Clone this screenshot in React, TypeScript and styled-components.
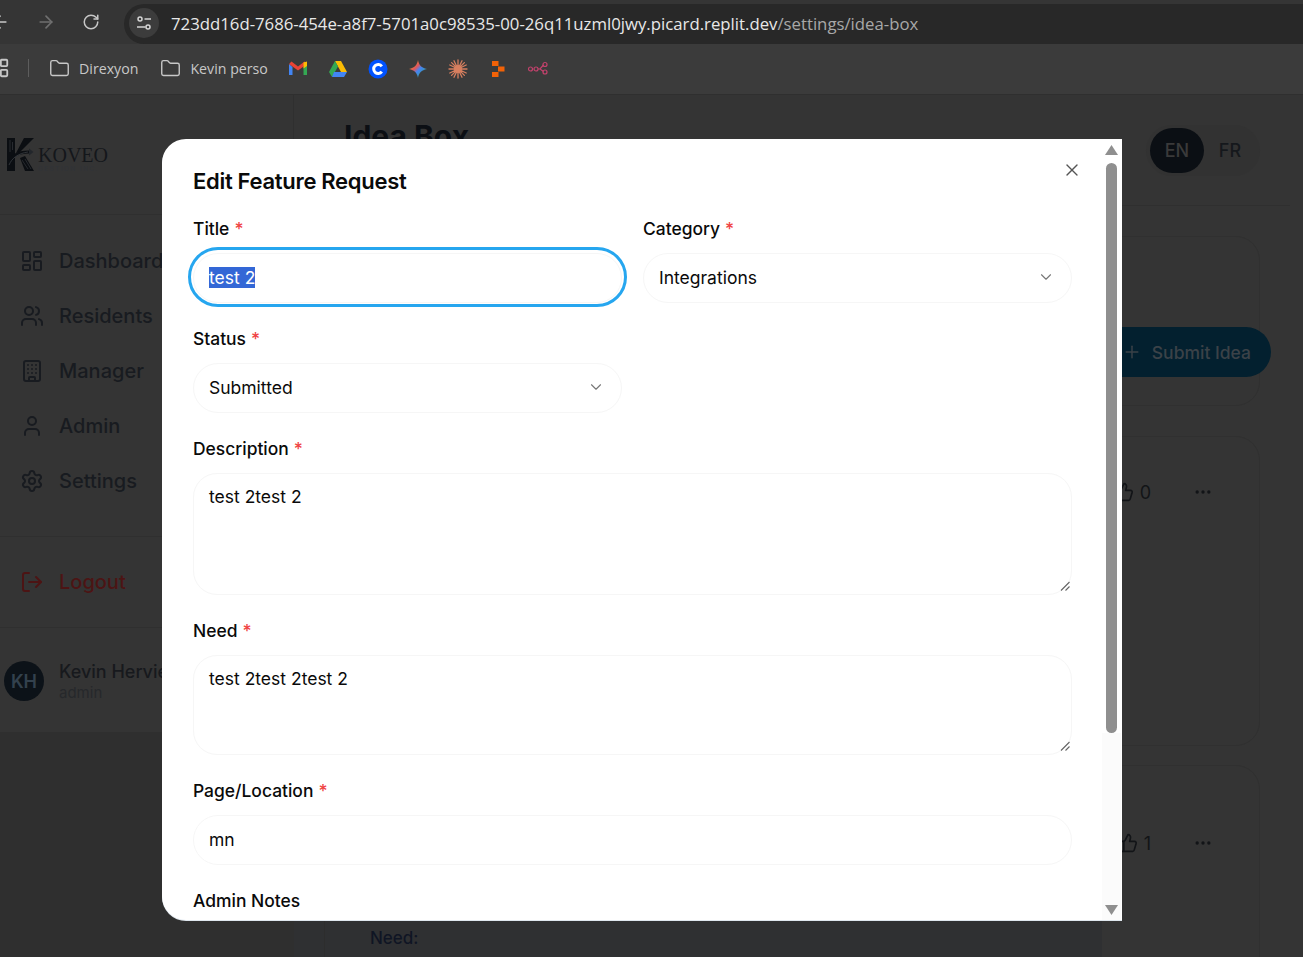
import React from "react";
import styled, { createGlobalStyle } from "styled-components";
import { ArrowLeft, ArrowRight, RotateCw, Folder, LayoutGrid, Building, Users, User, Settings, LogOut, LayoutDashboard, Plus, ThumbsUp, Ellipsis, X, ChevronDown } from "lucide-react";

const Global = createGlobalStyle`
  html, body { margin: 0; padding: 0; background: #343434; }
  * { box-sizing: border-box; }
  body { font-family: Inter, "Liberation Sans", sans-serif; }
  ::selection { background: #3367d6; color: #fff; }
`;

const Page = styled.div`
  position: relative; width: 1303px; height: 957px; overflow: hidden;
  display: flex; flex-direction: column; background: #343434;
`;

/* Browser chrome */
const AddressRow = styled.div`
  height: 44px; background: #353535; display: flex; align-items: center; color: #c7c7c7; flex: none;
`;
const NavGroup = styled.div`
  display: flex; align-items: center; gap: 26px; margin-left: -10px; width: 134px;
`;
const DimIcon = styled.span<{ $off?: boolean }>`
  display: flex; color: ${p => (p.$off ? "#6f6f6f" : "#c7c7c7")};
`;
const UrlPill = styled.div`
  flex: 1; height: 40px; margin-top: 4px; margin-right: -30px; border-radius: 20px 0 0 20px; background: #282828;
  display: flex; align-items: center; padding: 0 0 2px 5px; gap: 12px;
  font: 400 16.76px "Open Sans", "Liberation Sans", sans-serif; color: #e8e8e8; white-space: nowrap;
`;
const SiteIcon = styled.span`
  width: 30px; height: 30px; border-radius: 50%; background: #3c3c3c; display: flex; align-items: center; justify-content: center; flex: none;
`;
const UrlMuted = styled.span` color: #a8a8a8; `;
const BookmarkRow = styled.div`
  height: 51px; background: #3b3b3b; border-bottom: 1px solid #2f2f2f; display: flex; align-items: center; flex: none; padding-bottom: 2px;
  font: 400 14.2px "Open Sans", "Liberation Sans", sans-serif; color: #c8c8c8;
`;
const Apps = styled.span`
  display: flex; margin-left: -12px; width: 40px; color: #c7c7c7;
`;
const BarSep = styled.span`
  width: 1px; height: 18px; background: #5d5d5d; margin-right: 20px;
`;
const Bookmark = styled.span<{ $mr: number }>`
  display: flex; align-items: center; gap: 9px; margin-right: ${p => p.$mr}px;
`;
const Fav = styled.svg`
  width: 20px; height: 20px; margin: 2px 20px 0 0; flex: none;
`;

/* App */
const AppArea = styled.div` flex: 1; display: flex; min-height: 0; `;
const SidebarColumn = styled.div`
  width: 294px; flex: none; display: flex; flex-direction: column; background: #2f2f2f;
`;
const Sidebar = styled.aside`
  height: 638px; background: #343434; border-right: 1px solid #2f2f2f; border-bottom: 1px solid #2f2f2f; display: flex; flex-direction: column;
`;
const LogoBox = styled.div`
  height: 120px; flex: none; border-bottom: 1px solid #2f2f2f; display: flex; align-items: flex-start; padding: 43px 0 0 7px; gap: 4px;
`;
const LogoText = styled.div`
  display: flex; flex-direction: column; margin-top: 7px; color: #14171b;
`;
const LogoName = styled.span`
  font: 400 20px/20px "Liberation Serif", serif;
`;
const LogoSub = styled.span`
  font: 400 6.5px/8px Inter, sans-serif; letter-spacing: 1.4px; color: #303338; text-transform: uppercase; white-space: nowrap;
`;
const Nav = styled.nav`
  display: flex; flex-direction: column; padding: 26px 0 0 20px; gap: 15px; height: 322px; flex: none; border-bottom: 1px solid #2f2f2f;
`;
const NavItem = styled.div<{ $danger?: boolean }>`
  height: 40px; display: flex; align-items: center; gap: 15px; font-size: 20px; font-weight: 500; white-space: nowrap;
  color: ${p => (p.$danger ? "#4c1414" : "#181b20")};
`;
const LogoutBox = styled.div`
  height: 91px; flex: none; border-bottom: 1px solid #2f2f2f; padding: 25px 0 0 20px;
`;
const Profile = styled.div`
  display: flex; align-items: flex-start; gap: 15px; padding: 33px 0 0 4px;
`;
const Avatar = styled.div`
  width: 40px; height: 40px; border-radius: 50%; background: #0c1218; color: #33414d; font-weight: 600; font-size: 18px;
  display: flex; align-items: center; justify-content: center; flex: none;
`;
const ProfileText = styled.div` display: flex; flex-direction: column; white-space: nowrap; `;
const ProfileName = styled.span` font-size: 18px; line-height: 22px; font-weight: 500; color: #17191d; `;
const ProfileRole = styled.span` font-size: 15px; line-height: 20px; color: #26282b; `;

const Main = styled.main`
  flex: 1; min-width: 0; display: flex; flex-direction: column;
`;
const MainHeader = styled.header`
  height: 111px; flex: none; margin-right: 13px; border-bottom: 1px solid #2f2f2f; display: flex; justify-content: space-between; align-items: flex-start; padding: 25px 30px 0 50px;
`;
const PageTitle = styled.h1`
  margin: 0; font-size: 30px; line-height: 32px; font-weight: 700; color: #0c0f14;
`;
const LangToggle = styled.div`
  height: 51px; width: 114px; margin-top: 5px; border-radius: 26px; background: #323232; display: flex; align-items: center; padding: 0 4px; font-size: 18px; font-weight: 500;
`;
const LangOption = styled.span<{ $active?: boolean }>`
  height: 45px; border-radius: 23px; display: flex; align-items: center; justify-content: center;
  width: ${p => (p.$active ? 54 : 52)}px;
  background: ${p => (p.$active ? "#0b0f14" : "transparent")};
  color: ${p => (p.$active ? "#3a3a3a" : "#15181c")};
`;
const Content = styled.div`
  padding: 30px 43px 0 31px; display: flex; flex-direction: column;
`;
const Card = styled.section<{ $h: number; $gap: number }>`
  height: ${p => p.$h}px; flex: none; margin-bottom: ${p => p.$gap}px; border: 1px solid #303030; border-radius: 24px; background: #343434; display: flex;
`;
const TopCard = styled(Card)`
  justify-content: flex-end; align-items: flex-start; padding-top: 90px;
`;
const SubmitButton = styled.div`
  height: 50px; width: 190px; margin-right: -12px; flex: none; border-radius: 25px; background: #03202f; color: #3b4248; display: flex; align-items: center; justify-content: flex-end;
  padding-right: 20px; gap: 10px; font-size: 17.5px; font-weight: 500;
`;
const RowCard = styled(Card)`
  justify-content: flex-end; align-items: flex-start; color: #121417; font-size: 18px;
`;
const VoteArea = styled.div<{ $top: number }>`
  margin-top: ${p => p.$top}px; margin-right: 31px; display: flex; align-items: center; gap: 6px;
`;
const DotsBtn = styled.div`
  width: 50px; height: 36px; border-radius: 18px; margin-left: 21px; display: flex; align-items: center; justify-content: center; color: #121417;
`;
const NeedBlock = styled.div`
  position: absolute; left: 294px; top: 921px; width: 808px; height: 36px;
  background: linear-gradient(#2d2d2d, #2d2d2d) 30px 0 / 1px 100% no-repeat, #2f3032;
  color: #0f1524; font-size: 17px; font-weight: 500; padding: 7px 0 0 76px;
`;

/* Modal */
const Modal = styled.div`
  position: absolute; left: 162px; top: 139px; width: 960px; height: 781px; background: #fff; border-radius: 24px 0 0 24px; overflow: hidden; color: #0a0a0a;
  display: flex; flex-direction: column; padding: 28px 50px 0 31px; box-shadow: 0 1px 0 #dfe7ee;
`;
const ModalTitle = styled.h2`
  margin: 0 0 24px; font-size: 22px; line-height: 28px; font-weight: 600; letter-spacing: -0.3px; color: #0a0a0a;
`;
const CloseBtn = styled.span`
  position: absolute; left: 900px; top: 21px; color: #555; display: flex;
`;
const FormGrid = styled.div`
  display: grid; grid-template-columns: 429px 429px; column-gap: 21px; row-gap: 0;
`;
const Field = styled.div<{ $full?: boolean }>`
  ${p => (p.$full ? "grid-column: 1 / -1;" : "")}
  display: flex; flex-direction: column; gap: 14px; margin-bottom: 26px;
`;
const Label = styled.label`
  font-size: 17.45px; line-height: 20px; font-weight: 500; color: #0a0a0a; white-space: nowrap;
`;
const Required = styled.span`
  color: #f04444; margin-left: 5px;
`;
const InputLike = styled.div`
  height: 50px; border: 1px solid #f6f6f6; border-radius: 25px; padding: 0 15px 2px; display: flex; align-items: center; justify-content: space-between; font-size: 17.5px; color: #0a0a0a; background: #fff;
`;
const FocusInput = styled(InputLike)`
  position: relative;
  &::after { content: ""; position: absolute; inset: -7px -6px -5px -6px; border: 3px solid #26a6ef; border-radius: 30px; }
`;
const Selected = styled.span`
  background: #3367d6; color: #fff; line-height: 21px; display: inline-block;
`;
const TextArea = styled.div<{ $h: number }>`
  height: ${p => p.$h}px; border: 1px solid #f6f6f6; border-radius: 24px; padding: 12px 15px; font-size: 17.5px; line-height: 22px; color: #0a0a0a; position: relative;
`;
const Grip = styled.svg`
  position: absolute; right: 1px; bottom: 3px; width: 10px; height: 10px;
`;
const ChevronMuted = styled.span` display: flex; color: #777; margin-right: 1px; `;
const Scrollbar = styled.div`
  position: absolute; right: 1px; top: 0; bottom: 0; width: 19px; background: linear-gradient(#fff 594px, #fbfbfb 594px); display: flex; flex-direction: column; align-items: center;
`;
const ScrollArrow = styled.svg<{ $up?: boolean }>`
  width: 13px; height: 10px; flex: none; margin: ${p => (p.$up ? "6px 0 0" : "0 0 5px")};
`;
const ScrollThumb = styled.div`
  width: 11px; height: 570px; background: #8f8f8f; border-radius: 6px; margin-top: 8px; flex: none;
`;
const ScrollTrack = styled.div` flex: 1; `;

const navStroke = 2;

export default function App() {
  return (
    <>
      <Global />
      <Page>
        <AddressRow>
          <NavGroup>
            <ArrowLeft size={20} />
            <DimIcon $off><ArrowRight size={20} /></DimIcon>
            <DimIcon><RotateCw size={18} /></DimIcon>
          </NavGroup>
          <UrlPill>
            <SiteIcon>
              <svg width="18" height="18" viewBox="0 0 18 18" fill="none" stroke="#d5d5d5" strokeWidth="1.5">
                <circle cx="5" cy="5" r="2" /><path d="M9.5 5H16" />
                <circle cx="13" cy="13" r="2" /><path d="M2 13h8.5" />
              </svg>
            </SiteIcon>
            <span>723dd16d-7686-454e-a8f7-5701a0c98535-00-26q11uzml0jwy.picard.replit.dev<UrlMuted>/settings/idea-box</UrlMuted></span>
          </UrlPill>
        </AddressRow>
        <BookmarkRow>
          <Apps><LayoutGrid size={22} /></Apps>
          <BarSep />
          <Bookmark $mr={22}><Folder size={21} strokeWidth={1.6} />Direxyon</Bookmark>
          <Bookmark $mr={20}><Folder size={21} strokeWidth={1.6} />Kevin perso</Bookmark>
          <Fav viewBox="0 0 20 20">
            <path d="M1 5v11h3.500V8z" fill="#4285f4" /><path d="M15.500 8v8H19V5z" fill="#34a853" />
            <path d="M1 5l9 6.500L19 5l-2.500-2.500L10 7.500 3.500 2.500z" fill="#ea4335" /><path d="M15.500 3.500L19 2.500V7l-3.500 2.500z" fill="#fbbc04" />
          </Fav>
          <Fav viewBox="0 0 20 20">
            <path d="M7 2h6l6 11h-6z" fill="#fbbc04" /><path d="M7 2l3 5.500L4 18l-3-5z" fill="#34a853" /><path d="M6 13h13l-3 5H4z" fill="#4285f4" />
          </Fav>
          <Fav viewBox="0 0 20 20">
            <circle cx="10" cy="10" r="9.500" fill="#0052ff" />
            <path d="M13.800 7.300a4.500 4.500 0 1 0 0 5.400" fill="none" stroke="#fff" strokeWidth="3" />
          </Fav>
          <Fav viewBox="0 0 20 20">
            <defs>
              <linearGradient id="gem" x1="0" y1="0" x2="1" y2="1">
                <stop offset="0" stopColor="#f4b400" /><stop offset="0.4" stopColor="#e0565b" /><stop offset="0.55" stopColor="#4285f4" /><stop offset="1" stopColor="#34a853" />
              </linearGradient>
            </defs>
            <path d="M10 1c.8 5 3.500 7.800 9 9-5.500 1.200-8.200 4-9 9-.8-5-3.500-7.800-9-9 5.500-1.200 8.200-4 9-9z" fill="url(#gem)" />
          </Fav>
          <Fav viewBox="0 0 20 20" stroke="#d77f5f" strokeWidth="1.300" strokeLinecap="round">
            <path d="M10 1v18M1 10h18M3.600 3.600l12.800 12.800M16.400 3.600L3.600 16.400M6 1.800l8 16.400M14 1.800L6 18.200M1.800 6l16.400 8M18.200 6L1.800 14" />
            <circle cx="10" cy="10" r="4" fill="#d77f5f" stroke="none" />
          </Fav>
          <Fav viewBox="0 0 20 20" fill="#f26207">
            <rect x="4" y="2" width="6.500" height="5" /><rect x="10" y="7.500" width="6.500" height="5" /><rect x="4" y="13" width="6.500" height="5" />
          </Fav>
          <Fav viewBox="0 0 20 20" fill="none" stroke="#c4426d" strokeWidth="1.200">
            <circle cx="2.500" cy="10" r="2" /><circle cx="8" cy="10" r="2" /><circle cx="17" cy="5.500" r="2" /><circle cx="17" cy="13" r="2" />
            <path d="M10 10h2l3.500-4M12 10l3.500 2.500" />
          </Fav>
        </BookmarkRow>
        <AppArea>
          <SidebarColumn>
            <Sidebar>
              <LogoBox>
                <svg width="27" height="33" viewBox="0 0 27 33">
                  <path d="M0 0h8v33H0z" fill="#0b0e12" />
                  <path d="M9 15L17 0h10L13 14z" fill="#0b0e12" />
                  <path d="M13 20l5-2 9 15h-9z" fill="#0b0e12" />
                  <path d="M2 26C4 18 10 14 22 14" fill="none" stroke="#0b0e12" strokeWidth="3" />
                  <path d="M22 10.500l4.500 3.500-4.500 3.500z" fill="#22262b" />
                  <path d="M3 2v12M5.500 4v8M15 22l6 9M18 21l6 10" fill="none" stroke="#33373c" strokeWidth="0.700" />
                  <path d="M2 27C5 20 11 15.500 21 14" fill="none" stroke="#3a3e43" strokeWidth="0.800" />
                </svg>
                <LogoText>
                  <LogoName>KOVEO</LogoName>
                  <LogoSub>Gestion inc.</LogoSub>
                </LogoText>
              </LogoBox>
              <Nav>
                <NavItem><LayoutDashboard size={24} strokeWidth={navStroke} />Dashboard</NavItem>
                <NavItem><Users size={24} strokeWidth={navStroke} />Residents</NavItem>
                <NavItem><Building size={24} strokeWidth={navStroke} />Manager</NavItem>
                <NavItem><User size={24} strokeWidth={navStroke} />Admin</NavItem>
                <NavItem><Settings size={24} strokeWidth={navStroke} />Settings</NavItem>
              </Nav>
              <LogoutBox>
                <NavItem $danger><LogOut size={24} strokeWidth={navStroke} />Logout</NavItem>
              </LogoutBox>
              <Profile>
                <Avatar>KH</Avatar>
                <ProfileText>
                  <ProfileName>Kevin Hervieux</ProfileName>
                  <ProfileRole>admin</ProfileRole>
                </ProfileText>
              </Profile>
            </Sidebar>
          </SidebarColumn>
          <Main>
            <MainHeader>
              <PageTitle>Idea Box</PageTitle>
              <LangToggle>
                <LangOption $active>EN</LangOption>
                <LangOption>FR</LangOption>
              </LangToggle>
            </MainHeader>
            <Content>
              <TopCard $h={170} $gap={30}>
                <SubmitButton><Plus size={20} strokeWidth={1.75} />Submit Idea</SubmitButton>
              </TopCard>
              <RowCard $h={310} $gap={19}>
                <VoteArea $top={37}>
                  <ThumbsUp size={20} strokeWidth={2} />0
                  <DotsBtn><Ellipsis size={20} /></DotsBtn>
                </VoteArea>
              </RowCard>
              <RowCard $h={300} $gap={0}>
                <VoteArea $top={59}>
                  <ThumbsUp size={20} strokeWidth={2} />1
                  <DotsBtn><Ellipsis size={20} /></DotsBtn>
                </VoteArea>
              </RowCard>
            </Content>
          </Main>
        </AppArea>
        <NeedBlock>Need:</NeedBlock>

        <Modal>
          <ModalTitle>Edit Feature Request</ModalTitle>
          <CloseBtn><X size={20} strokeWidth={1.6} /></CloseBtn>
          <FormGrid>
            <Field>
              <Label>Title<Required>*</Required></Label>
              <FocusInput><Selected>test 2</Selected></FocusInput>
            </Field>
            <Field>
              <Label>Category<Required>*</Required></Label>
              <InputLike>Integrations<ChevronMuted><ChevronDown size={18} strokeWidth={1.5} /></ChevronMuted></InputLike>
            </Field>
            <Field>
              <Label>Status<Required>*</Required></Label>
              <InputLike>Submitted<ChevronMuted><ChevronDown size={18} strokeWidth={1.5} /></ChevronMuted></InputLike>
            </Field>
            <span />
            <Field $full>
              <Label>Description<Required>*</Required></Label>
              <TextArea $h={122}>test 2test 2
                <Grip viewBox="0 0 10 10" stroke="#666" strokeWidth="1.100"><path d="M1 9.500L9.500 1M5.500 9.500L9.500 5.500" /></Grip>
              </TextArea>
            </Field>
            <Field $full>
              <Label>Need<Required>*</Required></Label>
              <TextArea $h={100}>test 2test 2test 2
                <Grip viewBox="0 0 10 10" stroke="#666" strokeWidth="1.100"><path d="M1 9.500L9.500 1M5.500 9.500L9.500 5.500" /></Grip>
              </TextArea>
            </Field>
            <Field $full>
              <Label>Page/Location<Required>*</Required></Label>
              <InputLike>mn</InputLike>
            </Field>
            <Field $full>
              <Label>Admin Notes</Label>
            </Field>
          </FormGrid>
          <Scrollbar>
            <ScrollArrow $up viewBox="0 0 13 10"><path d="M6.500 0L13 10H0z" fill="#8f8f8f" /></ScrollArrow>
            <ScrollThumb />
            <ScrollTrack />
            <ScrollArrow viewBox="0 0 13 10"><path d="M6.500 10L13 0H0z" fill="#8f8f8f" /></ScrollArrow>
          </Scrollbar>
        </Modal>
      </Page>
    </>
  );
}
